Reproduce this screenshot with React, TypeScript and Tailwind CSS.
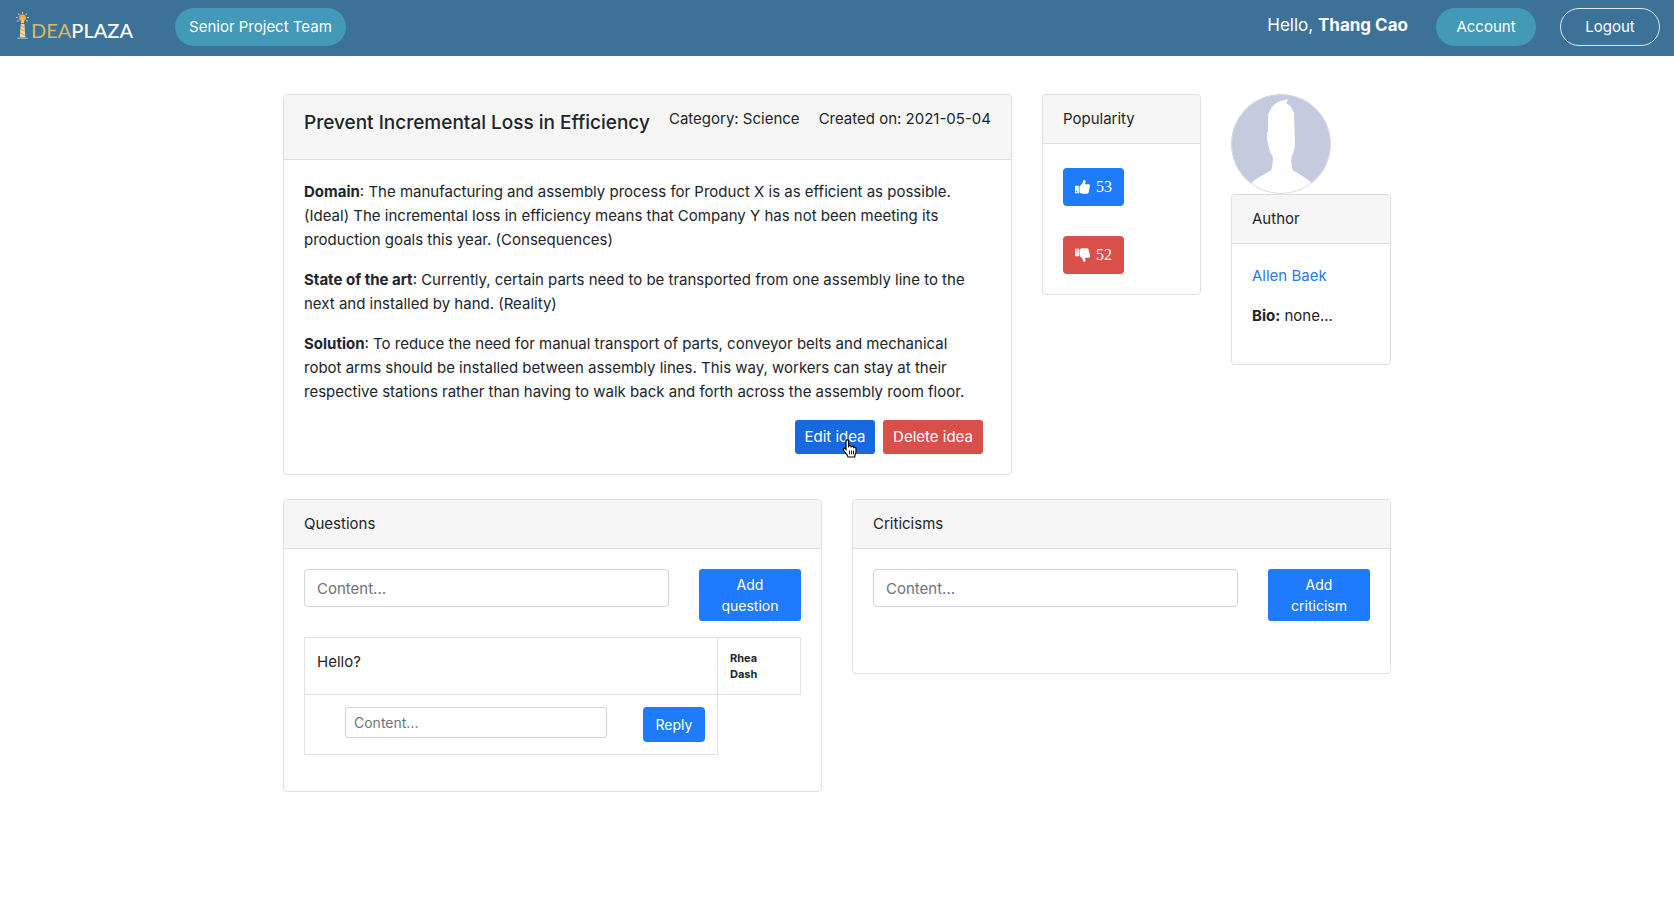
import React from "react";

function Logo() {
  return (
    <a href="#" aria-label="IdeaPlaza" className="mt-1 flex items-end font-[Lato,sans-serif] text-xl leading-5 text-white">
      <svg width="15" height="28" viewBox="0 0 15 28" fill="none">
        <g stroke="#e3c88a" strokeWidth="1.100">
          <path d="M6.500 0v1.800M2.200 1.500l1.200 1.500M10.800 1.500L9.600 3M0 5.500h1.800M11.200 5.500H13M1.200 9.300l1.500-.8M11.800 9.300l-1.500-.8" />
        </g>
        <circle cx="6.500" cy="6" r="3.400" fill="#f0ae35" />
        <path d="M5.500 6.500l1 1 1-1M6.500 7.500V9" stroke="#fff0c0" strokeWidth=".8" />
        <path d="M5 9.200h3v2H5z" fill="#f3d48c" />
        <path d="M4.800 12h3.600l1 13.500H3.800z" fill="#ecdcae" />
        <path d="M5 13.500l3.500 2M4.700 17l4 2.300M4.500 21l4.500 2.500" stroke="#e3a93c" strokeWidth="1.300" />
        <path d="M1 26.300h11" stroke="#7db3c6" strokeWidth="1.200" />
      </svg>
      <span>
        <span className="text-[#dcb75c]">DEA</span>
        <span className="font-medium">PLAZA</span>
      </span>
    </a>
  );
}

function Thumb({ down = false }: { down?: boolean }) {
  return (
    <svg width="15" height="14" viewBox="0 0 15 14" aria-hidden="true" fill="currentColor" className={down ? "-scale-y-100" : ""}>
      <path fillRule="evenodd" d="M.4 5.700h3.400v7.500H.4a.4.4 0 0 1-.4-.4V6.100c0-.2.2-.4.4-.4zM1 11v1.200h1.100V11z" />
      <path d="M4.500 6.300 7.300 3.400 8.300.6C8.700-.2 10.500-.1 10.600 1.200c0 1.100-.3 2-.6 3h3.500c1.100 0 1.600.8 1.500 1.600l-1.300 6.400c-.2.900-.8 1.500-1.700 1.500H7.700c-1.100 0-2-.6-3.200-1.100z" />
    </svg>
  );
}

function Avatar() {
  return (
    <svg width="100" height="100" viewBox="0 0 100 100" role="img" aria-label="Author picture" className="rounded-full">
      <circle cx="50" cy="50" r="50" fill="#c4cbdf" />
      <path
        fill="#fff"
        d="M37 21 39 16C41 12 44 10 47 8 50 6 53 7 56 5L57 6 55 9C59 11 61 14 62 17L63 19 64 49C64 54 63 57 62 59 60 64 60 69 61 73 61 76 63 77 65 78 70 81 75 84 80 88L86 100H14L20 89C26 84 32 81 37 78 40 77 41 75 41 73L42 65C42 61 39 60 38 54L36 45V38H37Z"
      />
      <circle cx="50" cy="50" r="49.500" fill="none" stroke="#d9dade" />
    </svg>
  );
}

function HandPointer() {
  return (
    <svg width="16" height="19" viewBox="0 0 16 19" aria-hidden="true" className="pointer-events-none absolute top-[19px] left-[47px]">
      <path
        d="M4 1.900C4 .4 6.600.4 6.600 1.900V7.200C7.200 6.400 9 6.600 9.200 7.700 9.900 7 11.500 7.200 11.700 8.400 12.500 7.900 14 8.300 14 9.700V12.500C14 14.500 12.700 15.200 12.700 18H6C5.500 15.500 3.200 14 1.600 11.200.6 9.600 2.300 8.600 3.300 9.700L4 10.500Z"
        fill="#fff"
        stroke="#000"
        strokeWidth="1.200"
      />
      <path d="M7.500 11.500v3.800M9.500 11.500v3.800M11.500 11.500v3.800" stroke="#000" strokeWidth=".9" />
    </svg>
  );
}

function Card({ title, bodyClass = "p-5", children }: { title: React.ReactNode; bodyClass?: string; children: React.ReactNode }) {
  return (
    <section className="overflow-hidden rounded border border-[#dfdfdf] bg-white">
      <div className="border-b border-[#dfdfdf] bg-[#f6f6f6] px-5 py-3">{title}</div>
      <div className={bodyClass}>{children}</div>
    </section>
  );
}

function AddForm({ label, name }: { label: string; name: string }) {
  return (
    <form className="mb-4 flex items-start gap-[30px]">
      <input
        aria-label={name}
        placeholder="Content..."
        className="h-[38px] min-w-0 flex-1 rounded border border-[#ced4da] px-3 placeholder:text-[#6c757d]"
      />
      <button type="button" className="w-[102px] rounded-[3px] bg-[#1f7bfd] px-4 py-[5px] text-sm leading-[21px] text-white">
        {label}
      </button>
    </form>
  );
}

export default function App() {
  return (
    <div className="min-h-screen bg-white font-[Inter,sans-serif] text-[15px] leading-6 text-[#212529]">
      <header className="flex h-14 items-start bg-[#3d7298] pt-2 pr-[14px] pl-4 text-white">
        <Logo />
        <button className="ml-[42px] h-[38px] rounded-full bg-[#4299b8] px-[14px]">Senior Project Team</button>
        <p className="mr-7 ml-auto pt-[5px] text-[17px]">
          Hello, <b>Thang Cao</b>
        </p>
        <button className="mr-6 h-[38px] w-[100px] rounded-full bg-[#4299b8]">Account</button>
        <button className="h-[38px] w-[100px] rounded-full border border-[#dbe9f5]">Logout</button>
      </header>

      <main className="mx-auto max-w-[1108px] pt-[38px]">
        <div className="flex items-start gap-[30px]">
          <div className="min-w-0 flex-1">
            <Card
              title={
                <div className="flex justify-between">
                  <h1 className="mb-2 text-[19px] leading-8 font-medium">Prevent Incremental Loss in Efficiency</h1>
                  <span>Category: Science</span>
                  <span>Created on: 2021-05-04</span>
                </div>
              }
            >
              <div className="space-y-4 pr-4">
                <p>
                  <b>Domain</b>: The manufacturing and assembly process for Product X is as efficient as possible. (Ideal) The incremental
                  loss in efficiency means that Company Y has not been meeting its production goals this year. (Consequences)
                </p>
                <p>
                  <b>State of the art</b>: Currently, certain parts need to be transported from one assembly line to the next and
                  installed by hand. (Reality)
                </p>
                <p>
                  <b>Solution</b>: To reduce the need for manual transport of parts, conveyor belts and mechanical robot arms should be
                  installed between assembly lines. This way, workers can stay at their respective stations rather than having to walk
                  back and forth across the assembly room floor.
                </p>
              </div>
              <div className="mt-4 mr-2 flex justify-end gap-2 text-white">
                <button className="relative h-[34px] w-20 rounded-[3px] bg-[#1769e0]">
                  Edit idea
                  <HandPointer />
                </button>
                <button className="h-[34px] w-[100px] rounded-[3px] bg-[#d94f49]">Delete idea</button>
              </div>
            </Card>
          </div>

          <div className="w-[159px]">
            <Card title={<h2>Popularity</h2>} bodyClass="flex flex-col items-start gap-[30px] px-5 pt-6 pb-5">
              <button aria-label="Like" className="flex h-[38px] items-center gap-1.5 rounded bg-[#1f7bfd] px-3 font-[Liberation_Serif,serif] text-base text-white">
                <Thumb /> 53
              </button>
              <button aria-label="Dislike" className="flex h-[38px] items-center gap-1.5 rounded bg-[#d94f49] px-3 font-[Liberation_Serif,serif] text-base text-white">
                <Thumb down /> 52
              </button>
            </Card>
          </div>

          <div className="w-40">
            <Avatar />
            <Card title={<h2>Author</h2>}>
              <a href="#" className="mb-4 block text-[#2b78ea]">
                Allen Baek
              </a>
              <p className="mb-4">
                <b>Bio:</b> none...
              </p>
            </Card>
          </div>
        </div>

        <div className="mt-6 grid grid-cols-2 items-start gap-[30px]">
          <Card title={<h2>Questions</h2>}>
            <AddForm label="Add question" name="Question" />
            <table className="mb-4 w-full table-fixed border-collapse">
              <tbody>
                <tr>
                  <td className="border border-[#e2e2e2] p-3 align-top">Hello?</td>
                  <td className="w-[83px] border border-[#e2e2e2] p-3 align-top">
                    <p className="w-min text-[11px] leading-4 font-bold">Rhea Dash</p>
                  </td>
                </tr>
                <tr>
                  <td className="border border-[#e2e2e2] p-3">
                    <form className="flex items-start gap-9 pl-7">
                      <input
                        aria-label="Reply"
                        placeholder="Content..."
                        className="h-[31px] min-w-0 flex-1 rounded-[3px] border border-[#ced4da] px-2 text-sm placeholder:text-[#6c757d]"
                      />
                      <button type="button" className="h-[35px] w-[62px] rounded bg-[#1f7bfd] text-sm text-white">
                        Reply
                      </button>
                    </form>
                  </td>
                </tr>
              </tbody>
            </table>
          </Card>
          <Card title={<h2>Criticisms</h2>} bodyClass="px-5 pt-5 pb-9">
            <AddForm label="Add criticism" name="Criticism" />
          </Card>
        </div>
      </main>
    </div>
  );
}
